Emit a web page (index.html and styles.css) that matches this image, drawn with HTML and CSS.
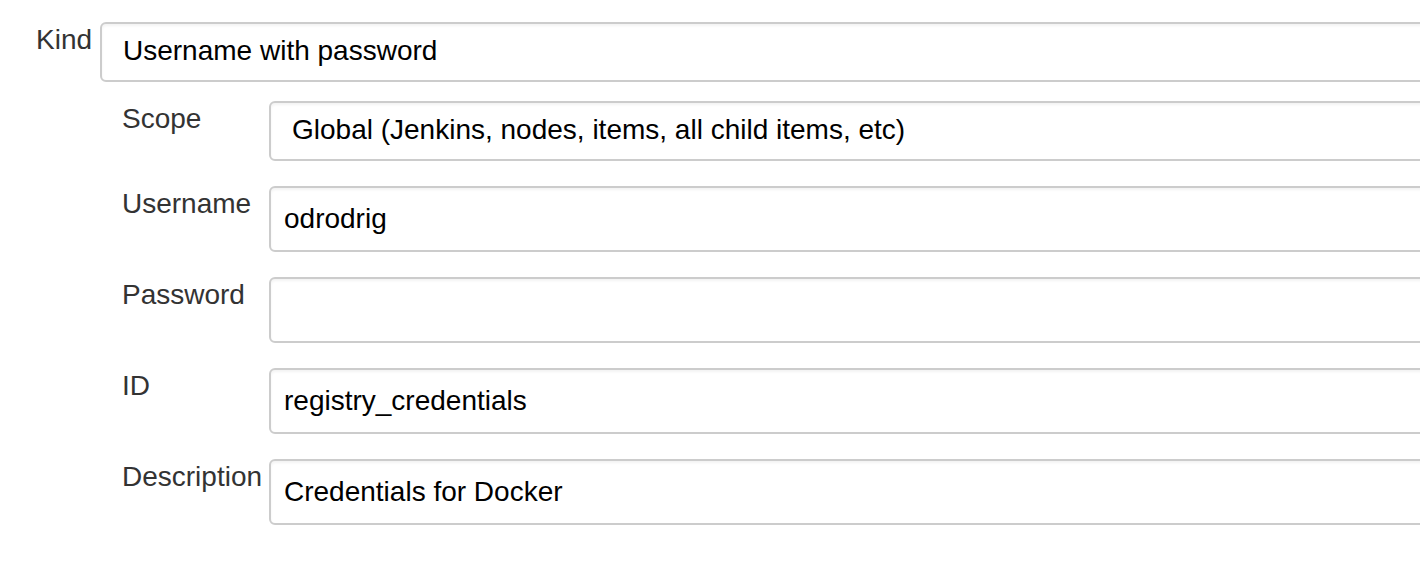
FILE: index.html
```html
<!DOCTYPE html>
<html lang="en">
<head>
<meta charset="utf-8">
<title>Credentials</title>
<link rel="stylesheet" href="styles.css">
</head>
<body>
<div class="page">
  <div class="kind-row">
    <div class="label kind-label">Kind</div>
    <div class="kind-col">
      <div class="field select">Username with password</div>
      <div class="sub">
        <div class="sub-row">
          <div class="label sub-label">Scope</div>
          <div class="field select">Global (Jenkins, nodes, items, all child items, etc)</div>
        </div>
        <div class="sub-row">
          <div class="label sub-label">Username</div>
          <div class="field text">odrodrig</div>
        </div>
        <div class="sub-row">
          <div class="label sub-label">Password</div>
          <div class="field text"></div>
        </div>
        <div class="sub-row">
          <div class="label sub-label">ID</div>
          <div class="field text">registry_credentials</div>
        </div>
        <div class="sub-row">
          <div class="label sub-label">Description</div>
          <div class="field text">Credentials for Docker</div>
        </div>
      </div>
    </div>
  </div>
</div>
</body>
</html>
```

FILE: styles.css
```css
html, body {
  margin: 0;
  padding: 0;
  background: #ffffff;
  overflow: hidden;
}

body {
  font-family: "Liberation Sans", Arial, Helvetica, sans-serif;
  font-size: 28px;
}

.page {
  width: 1424px;
  padding: 22px 0 0 36px;
}

.kind-row {
  display: flex;
}

.label {
  color: #333333;
  line-height: 32px;
  padding-top: 2px;
  white-space: nowrap;
}

.kind-label {
  width: 64px;
  flex: none;
}

.kind-col {
  flex: 1;
  min-width: 0;
}

.field {
  box-sizing: border-box;
  flex: 1;
  display: flex;
  align-items: center;
  border: 2px solid #cccccc;
  border-radius: 6px;
  background: #ffffff;
  box-shadow: inset 0 2px 3px rgba(0, 0, 0, 0.05);
  color: #000000;
  line-height: 32px;
  white-space: nowrap;
}

.select {
  height: 60px;
  padding: 0 0 2px 21px;
}

.text {
  height: 66px;
  padding-left: 13px;
}

.sub {
  display: flex;
  flex-direction: column;
  gap: 25px;
  margin-top: 19px;
  padding-left: 22px;
}

.sub-row {
  display: flex;
}

.sub-label {
  width: 147px;
  flex: none;
}
```
